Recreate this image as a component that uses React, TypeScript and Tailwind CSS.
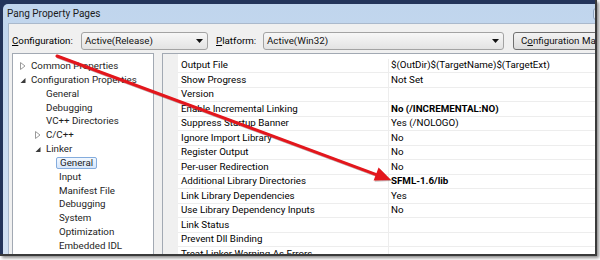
import React from "react";

// Visual Studio "Property Pages" dialog, cropped, with a red callout arrow.

type Node = { label: string; level: number; expander?: "open" | "closed"; selected?: boolean };

const tree: Node[] = [
  { label: "Common Properties", level: 0, expander: "closed" },
  { label: "Configuration Properties", level: 0, expander: "open" },
  { label: "General", level: 1 },
  { label: "Debugging", level: 1 },
  { label: "VC++ Directories", level: 1 },
  { label: "C/C++", level: 1, expander: "closed" },
  { label: "Linker", level: 1, expander: "open" },
  { label: "General", level: 2, selected: true },
  { label: "Input", level: 2 },
  { label: "Manifest File", level: 2 },
  { label: "Debugging", level: 2 },
  { label: "System", level: 2 },
  { label: "Optimization", level: 2 },
  { label: "Embedded IDL", level: 2 },
  { label: "Advanced", level: 2 },
];

const props: { name: string; value: string; bold?: boolean }[] = [
  { name: "Output File", value: "$(OutDir)$(TargetName)$(TargetExt)" },
  { name: "Show Progress", value: "Not Set" },
  { name: "Version", value: "" },
  { name: "Enable Incremental Linking", value: "No (/INCREMENTAL:NO)", bold: true },
  { name: "Suppress Startup Banner", value: "Yes (/NOLOGO)" },
  { name: "Ignore Import Library", value: "No" },
  { name: "Register Output", value: "No" },
  { name: "Per-user Redirection", value: "No" },
  { name: "Additional Library Directories", value: "SFML-1.6/lib", bold: true },
  { name: "Link Library Dependencies", value: "Yes" },
  { name: "Use Library Dependency Inputs", value: "No" },
  { name: "Link Status", value: "" },
  { name: "Prevent Dll Binding", value: "" },
  { name: "Treat Linker Warning As Errors", value: "" },
];

function Expander({ kind }: { kind: "open" | "closed" }) {
  return kind === "closed" ? (
    <svg width="6" height="8" viewBox="0 0 6 8" className="shrink-0">
      <path d="M0.5 0.5 L5 4 L0.5 7.5 Z" fill="none" stroke="#9a9a9a" strokeWidth="1" />
    </svg>
  ) : (
    <svg width="6" height="8" viewBox="0 0 6 8" className="shrink-0">
      <path d="M5.5 2 L5.5 7 L0.5 7 Z" fill="#3a3a3a" />
    </svg>
  );
}

function Combo({ text, w }: { text: string; w: string }) {
  return (
    <div
      className={`${w} h-[18px] flex items-center justify-between pl-[3px] pr-[4px] rounded-[3px] border border-[#a3a3a3] bg-gradient-to-b from-[#f7f7f7] to-[#e3e3e3] text-[#111]`}
    >
      <span>{text}</span>
      <svg width="7" height="4" viewBox="0 0 7 4">
        <path d="M0 0 H7 L3.5 4 Z" fill="#111" />
      </svg>
    </div>
  );
}

export default function App() {
  return (
    <div className="w-[600px] h-[260px] bg-white overflow-hidden font-['Roboto','Noto_Sans',sans-serif] text-[9.75px] leading-none">
      <div className="relative w-[597px] h-[256px] border-r-2 border-b-2 border-[#3a3a3a] shadow-[2px_2px_3px_rgba(0,0,0,0.45)] overflow-hidden bg-[#23345a]">
        {/* window */}
        <div className="ml-[3px] mt-[4px] w-[620px] h-[260px] rounded-tl-[5px] bg-gradient-to-b from-[#c0d5ed] to-[#d3e2f3] flex flex-col">
          {/* title bar */}
          <div className="h-[19px] shrink-0 flex items-center justify-between pl-[4px] pr-[16px]">
            <span className="text-[10px] text-[#1b1b1b]">Pang Property Pages</span>
            <div className="w-[14px] h-[12px] rounded-[3px] border border-[#8da3bf] bg-[#dfe9f5]" />
          </div>

          {/* client area */}
          <div className="ml-[5px] flex-1 bg-[#f0f0f0] border-l border-t border-[#aab9cc] flex flex-col">
            {/* configuration row */}
            <div className="flex items-center mt-[8px] pl-[3px]">
              <span className="w-[69px]">
                <span className="underline underline-offset-[1px]">C</span>onfiguration:
              </span>
              <Combo text="Active(Release)" w="w-[127px]" />
              <span className="ml-[8px] w-[47px]">
                <span className="underline underline-offset-[1px]">P</span>latform:
              </span>
              <Combo text="Active(Win32)" w="w-[241px]" />
              <div className="ml-[9px] w-[110px] h-[18px] flex items-center pl-[7px] rounded-[3px] border border-[#707070] bg-gradient-to-b from-[#f3f3f3] to-[#dcdcdc] whitespace-nowrap text-[#111]">
                C<span className="underline underline-offset-[1px]">o</span>nfiguration Manager...
              </div>
            </div>

            {/* panels */}
            <div className="flex mt-[3px] pl-[3px] flex-1">
              {/* tree */}
              <div className="w-[142px] border border-[#a2a9b3] bg-white pt-[5px] text-[#1e1e1e]">
                {tree.map((n, i) => (
                  <div key={i} className="h-[13.85px] flex items-center">
                    <div
                      className={
                        n.level === 0
                          ? "w-[15px] pl-[7px] flex items-center"
                          : n.level === 1
                          ? "w-[30px] pl-[22px] flex items-center"
                          : "w-[43px]"
                      }
                    >
                      {n.expander && <Expander kind={n.expander} />}
                    </div>
                    <span
                      className={
                        n.selected
                          ? "h-[12px] px-[3px] flex items-center rounded-[2px] border border-[#84acdd] bg-gradient-to-b from-[#f2f8ff] to-[#d6e6fb]"
                          : "px-[3px]"
                      }
                    >
                      {n.label}
                    </span>
                  </div>
                ))}
              </div>

              {/* property grid */}
              <div className="ml-[8px] flex-1 border-l border-t border-[#a2a9b3] bg-white flex">
                <div className="w-[15px] bg-[#f0f0f0]" />
                <div className="flex-1 pt-[4.5px]">
                  {props.map((p, i) => (
                    <div key={i} className="h-[14.5px] flex border-b border-[#ededed] text-black">
                      <div className="w-[211px] border-r border-[#ededed] pl-[3px] flex items-center whitespace-nowrap">
                        {p.name}
                      </div>
                      <div className={`pl-[2px] flex items-center whitespace-nowrap ${p.bold ? "font-bold" : ""}`}>
                        {p.value}
                      </div>
                    </div>
                  ))}
                </div>
              </div>
            </div>
          </div>
        </div>

        {/* red callout arrow */}
        <svg className="absolute left-0 top-0 pointer-events-none" width="597" height="256">
          <defs>
            <filter id="sh" x="-10%" y="-10%" width="120%" height="120%">
              <feDropShadow dx="1" dy="1" stdDeviation="0.6" floodColor="#000" floodOpacity="0.35" />
            </filter>
          </defs>
          <g filter="url(#sh)">
            <line x1="57" y1="56" x2="377" y2="174.8" stroke="#e3161c" strokeWidth="3" strokeLinecap="round" />
            <path d="M391 180 L373.6 180.4 L378.6 167.6 Z" fill="#e3161c" />
          </g>
        </svg>
      </div>
    </div>
  );
}
